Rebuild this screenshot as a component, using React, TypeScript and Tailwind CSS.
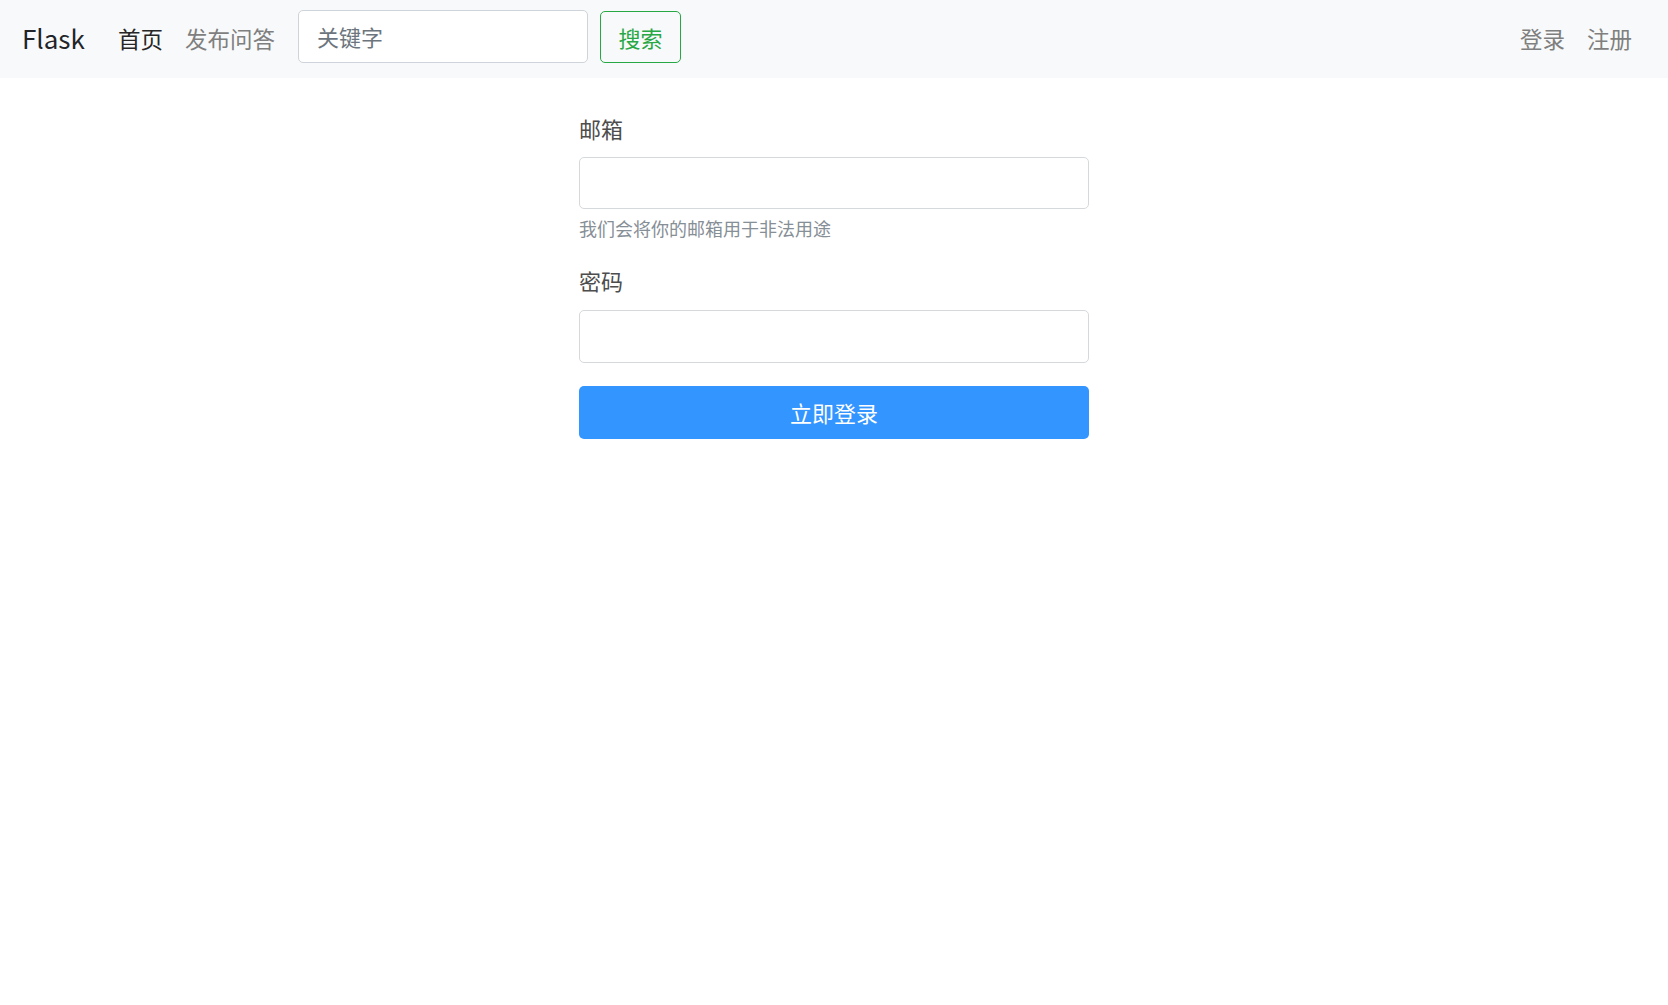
const font = "font-['Noto_Sans_CJK_SC','Noto_Sans',sans-serif]"

function Navbar() {
  return (
    <nav className="flex h-[78px] items-center bg-[#f8f9fa] pb-[2px] pl-[22px] pr-[25px]">
      <a className="mr-[22px] text-[26px] leading-[40px] text-[#212529]">Flask</a>
      <a className="px-[11px] text-[22.5px] leading-[40px] text-[#262626]">首页</a>
      <a className="px-[11px] text-[22.5px] leading-[40px] text-[#7f7f7f]">发布问答</a>
      <div className="ml-[12px] flex self-start pt-[10px]">
        <div className="flex h-[53px] w-[290px] items-center rounded-[5px] border border-[#ced4da] bg-white px-[18px] text-[22px] text-[#6c757d]">
          关键字
        </div>
        <button className="ml-[12px] mt-[1px] h-[52px] w-[81px] rounded-[5px] border border-[#28a745] text-[22px] text-[#28a745]">
          搜索
        </button>
      </div>
      <div className="ml-auto flex">
        <a className="px-[11px] text-[22.5px] leading-[40px] text-[#7f7f7f]">登录</a>
        <a className="px-[11px] text-[22.5px] leading-[40px] text-[#7f7f7f]">注册</a>
      </div>
    </nav>
  )
}

function LoginForm() {
  return (
    <div className="mx-auto mt-[34px] w-[510px]">
      <label className="mb-[12px] block text-[22px] leading-[33px] text-[#4d4d4d]">邮箱</label>
      <div className="h-[52px] rounded-[5px] border border-[#d6d9dc] bg-white" />
      <p className="mt-[6px] text-[18px] leading-[27px] text-[#868e96]">我们会将你的邮箱用于非法用途</p>
      <label className="mb-[13px] mt-[22px] block text-[22px] leading-[33px] text-[#4d4d4d]">密码</label>
      <div className="h-[53px] rounded-[5px] border border-[#d6d9dc] bg-white" />
      <button className="mt-[23px] h-[53px] w-full rounded-[5px] bg-[#3395ff] text-[22px] text-white">
        立即登录
      </button>
    </div>
  )
}

export default function App() {
  return (
    <div className={`min-h-[1005px] bg-white ${font}`}>
      <Navbar />
      <LoginForm />
    </div>
  )
}
